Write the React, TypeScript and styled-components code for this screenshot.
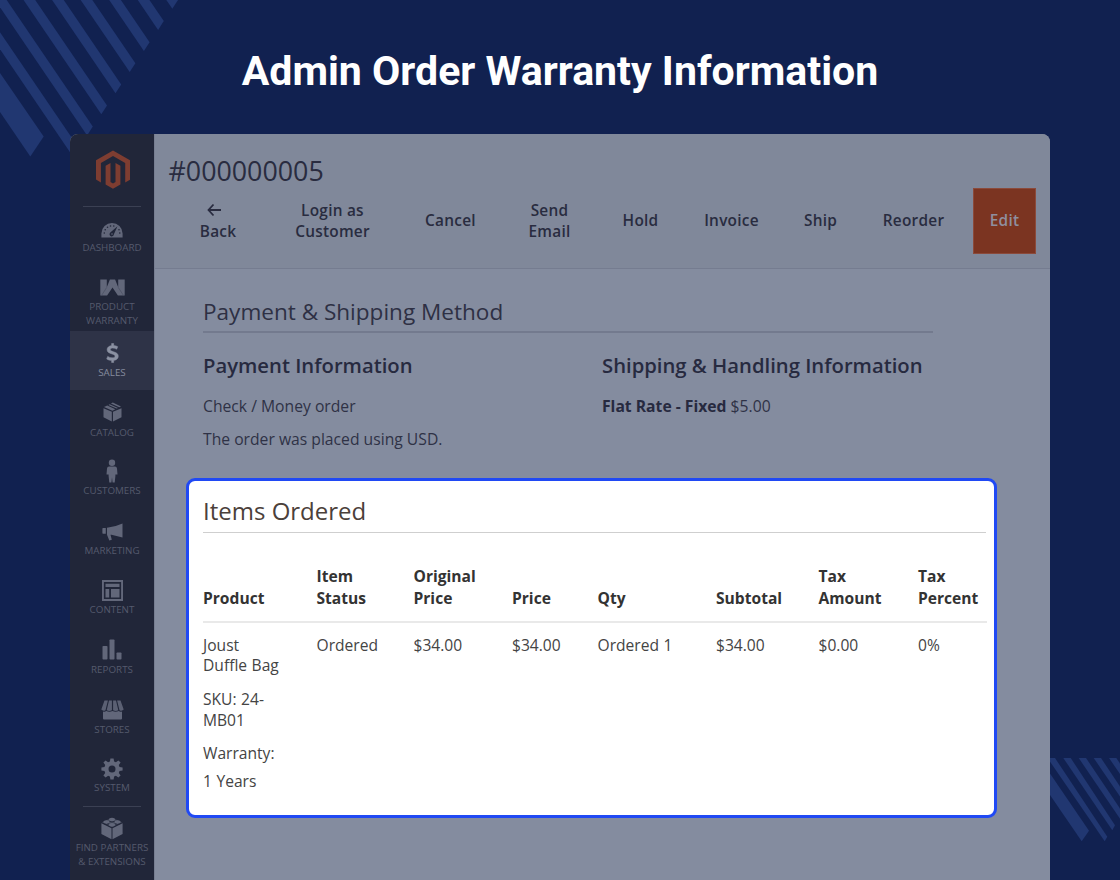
import React from 'react';
import styled, { createGlobalStyle, css } from 'styled-components';

const GlobalStyle = createGlobalStyle`
  *, *::before, *::after { box-sizing: border-box; }
  body {
    margin: 0;
    background: #112150;
    font-family: 'Open Sans', 'Noto Sans', sans-serif;
  }
`;

const Page = styled.main`
  position: relative;
  display: flex;
  flex-direction: column;
  align-items: center;
  width: 1120px;
  height: 880px;
  overflow: hidden;
  background: #112150;
`;

const Stripes = styled.svg`
  position: absolute;
  inset: 0;
  fill: #213771;
`;

const Heading = styled.h1`
  position: relative;
  margin: 0;
  height: 134px;
  padding-top: 47px;
  font: 700 41.05px/48px Roboto, sans-serif;
  color: #fff;
  white-space: nowrap;
`;

const Window = styled.div`
  position: relative;
  display: flex;
  width: 980px;
  height: 746px;
  border-radius: 8px 8px 0 0;
  overflow: hidden;
  background: #848c9f;
`;

const Sidebar = styled.nav`
  display: flex;
  flex-direction: column;
  align-items: center;
  width: 84px;
  flex: none;
  background: #212639;
`;

const LogoBox = styled.div`
  display: flex;
  justify-content: center;
  width: 58px;
  height: 73px;
  padding: 16px 0 0 1px;
  border-bottom: 1px solid #3b4053;
  svg { display: block; }
`;

const MenuItem = styled.a<{ $active?: boolean; $tall?: boolean; $first?: boolean }>`
  display: flex;
  flex-direction: column;
  align-items: center;
  width: 100%;
  flex: none;
  height: ${(p) => (p.$tall ? 66 : 59.4)}px;
  padding-top: 10px;
  color: #62677a;
  ${(p) => p.$first && css`height: 58px; padding-top: 11px;`}
  ${(p) => p.$active && css`color: #8b91a2; background: #2e3347;`}
`;

const IconBox = styled.span`
  display: flex;
  align-items: center;
  justify-content: center;
  height: 24px;
  flex: none;
  svg { display: block; fill: currentColor; }
`;

const MenuLabel = styled.span<{ $active?: boolean; $shift?: number }>`
  margin-top: ${(p) => 1 + (p.$shift ?? 0)}px;
  font-size: 9.8px;
  line-height: 14px;
  text-align: center;
  text-transform: uppercase;
  white-space: pre-line;
  color: ${(p) => (p.$active ? '#858b9e' : '#555a6d')};
`;

const Divider = styled.hr`
  width: 58px;
  height: 1px;
  flex: none;
  margin: 0;
  border: 0;
  background: #3b4053;
`;

const Content = styled.div`
  display: flex;
  flex-direction: column;
  flex: 1;
  border-left: 1px solid #777e91;
`;

const Header = styled.header`
  height: 135px;
  padding: 20px 14px 0;
  background: #80889a;
  border-bottom: 1px solid #757c90;
`;

const OrderNumber = styled.h2`
  margin: 0 0 0 -0.5px;
  height: 34px;
  font-size: 26.8px;
  font-weight: 400;
  line-height: 34px;
  color: #292c40;
`;

const Actions = styled.div`
  display: grid;
  grid-template-columns: 80px 149px 87px 111px 71px 111px 67px 119px 63px;
  justify-content: end;
  height: 66px;
`;

const Action = styled.button<{ $primary?: boolean }>`
  display: flex;
  flex-direction: column;
  align-items: center;
  justify-content: center;
  padding: 0 0 1px;
  border: 0;
  background: transparent;
  font: 600 15.4px/21px 'Open Sans', sans-serif;
  letter-spacing: 0.25px;
  text-align: center;
  white-space: pre-line;
  color: #292c40;
  svg { display: block; margin: 3px 8px 4px 0; }
  ${(p) => p.$primary && css`
    background: #7b3421;
    border: 1px solid #8b4a3b;
    color: #8f8f9f;
  `}
`;

const Details = styled.section`
  width: 730px;
  margin: 28px 0 0 48px;
  height: 181px;
`;

const SectionTitle = styled.h3<{ $light?: boolean }>`
  margin: 0;
  font-weight: 400;
  ${(p) => p.$light ? css`
    width: 783px;
    height: 39px;
    font-size: 24px;
    line-height: 34px;
    color: #4b403a;
    border-bottom: 1px solid #cfcfcf;
  ` : css`
    height: 36px;
    font-size: 22.55px;
    line-height: 30px;
    color: #2e3044;
    border-bottom: 2px solid #737a8e;
  `}
`;

const Columns = styled.div`
  display: grid;
  grid-template-columns: 399px 1fr;
`;

const SubTitle = styled.h4`
  margin: 19px 0 17px;
  font-size: 20.25px;
  font-weight: 600;
  line-height: 27px;
  color: #272a3f;
  white-space: nowrap;
`;

const Text = styled.p`
  margin: 0 0 12px;
  font-size: 15.7px;
  line-height: 21px;
  color: #2f3246;
  b { color: #272a3f; }
`;

const Card = styled.section`
  width: 811px;
  height: 340px;
  margin-left: 31px;
  padding: 13px 7px 0 14px;
  border: 3px solid #2049f4;
  border-radius: 9px;
  background: #fff;
`;

const Table = styled.table`
  width: 784px;
  table-layout: fixed;
  border-collapse: collapse;
  font-size: 15.6px;
  color: #444;
`;

const Col = styled.col<{ $w: number }>`
  width: ${(p) => p.$w}px;
`;

const Th = styled.th`
  height: 89px;
  padding: 0 0 12px;
  vertical-align: bottom;
  text-align: left;
  font-weight: 700;
  line-height: 22px;
  white-space: pre-line;
  color: #333;
  border-bottom: 2px solid #e9e9e9;
`;

const Td = styled.td`
  padding: 12px 0 0;
  vertical-align: top;
  line-height: 20.5px;
  white-space: pre-line;
  word-spacing: 0.5px;
`;

const Line = styled.div<{ $gap?: number; $lead?: number }>`
  margin-top: ${(p) => p.$gap ?? 0}px;
  line-height: ${(p) => p.$lead ?? 20.5}px;
`;

const LogoIcon = () => (
  <svg width="36" height="40" viewBox="0 0 36 40" fill="#7e3d31">
    <path d="M18 .5 35 10.2V29.700L30.200 32.400V12.900L18 6 5.900 12.900V32.400L1 29.600V10.200Z" />
    <path d="M10.600 15.700 15.500 13V31.900L18 33.400 20.500 31.900V13L25.400 15.700V34.500L18 38.800 10.600 34.500Z" />
  </svg>
);

const DashboardIcon = () => (
  <svg width="22" height="16" viewBox="0 0 22 16">
    <path d="M11 1A10.600 10.600 0 0 0 .4 11.500V15.500H21.600V11.500A10.600 10.600 0 0 0 11 1Z" />
    <g fill="#212639">
      <circle cx="3.300" cy="11" r=".8" /><circle cx="4.200" cy="7.800" r=".8" />
      <circle cx="6.500" cy="5.200" r=".8" /><circle cx="9.500" cy="4" r=".8" />
      <circle cx="12.800" cy="4" r=".8" /><circle cx="18" cy="7.800" r=".8" />
      <circle cx="18.800" cy="11" r=".8" />
      <path d="M16.500 4.300 12.900 12.200A2.200 2.200 0 1 1 9.300 10.500Z" />
    </g>
    <circle cx="11" cy="12" r=".8" />
  </svg>
);

const WarrantyIcon = () => (
  <svg width="25" height="17" viewBox="0 0 25 17">
    <path d="M.3.500H6.800V8.300L9.900.500H15.100L18.200 8.300V.500H24.700V16.500H17.900L12.500 8.600 7.100 16.500H.3Z" />
    <path d="M6.800 8.300 1.500 16.500M18.200 8.300 23.500 16.500" fill="none" stroke="#4b5063" strokeWidth=".7" />
  </svg>
);

const DollarIcon = () => (
  <svg width="13" height="20" viewBox="0 0 13 19" stroke="currentColor" strokeWidth=".5">
    <path d="M5.600 0H7.700V2C9.400 2.100 10.800 2.600 11.700 3.200L10.700 5.700C9.600 5.100 8.300 4.600 6.800 4.600C5.200 4.600 4.300 5.200 4.300 6.100C4.300 7 5 7.500 7.400 8.200C10.900 9.200 12.300 10.500 12.300 12.700C12.300 14.900 10.600 16.600 7.700 16.900V19H5.600V17C3.600 16.900 1.800 16.300.700 15.500L1.700 12.900C2.900 13.700 4.500 14.300 6.200 14.300C8 14.300 9 13.700 9 12.700C9 11.700 8.200 11.200 6.100 10.500C2.900 9.500 1.100 8.500 1.100 6.200C1.100 4 2.800 2.500 5.600 2.100Z" />
  </svg>
);

const CatalogIcon = () => (
  <svg width="19" height="20" viewBox="0 0 19 20">
    <path d="M.500 6.200 8.800 9.800V19.500L.500 15.300ZM18.500 6.200 10 9.800V19.500L18.500 15.300ZM1 5.100 4.200 3.500 12.400 7.200 9.400 8.700ZM5.400 2.900 6.700 2.200 15 5.900 13.600 6.600ZM7.900 1.600 9.800.600 18 4.500 16.200 5.300Z" />
  </svg>
);

const CustomerIcon = () => (
  <svg width="12" height="26" viewBox="0 0 12 26">
    <circle cx="6" cy="3.800" r="3.200" />
    <path d="M3 7.600H9Q10.800 7.600 11 9.500L11.500 15.500H9.400V17L8.700 23.500H6.600L6 18.500 5.400 23.500H3.300L2.600 17V15.500H.500L1 9.500Q1.200 7.600 3 7.600Z" />
  </svg>
);

const MarketingIcon = () => (
  <svg width="21" height="20" viewBox="0 -2 21 20">
    <path d="M20.500.500V14.500L9.500 11.800H8.500L9.800 16.800 7.300 17.500 5 11.800V4.800Q13 4 20.500.500ZM1 5H3.800V10.700H1Q.400 10.700.400 10V5.700Q.400 5 1 5Z" />
  </svg>
);

const ContentIcon = () => (
  <svg width="21" height="21" viewBox="0 0 21 21">
    <path fillRule="evenodd" d="M0 0H21V21H0ZM1.900 1.900V19.100H19.100V1.900ZM3.500 3.700H17.500V7.100H3.500ZM3.500 9H7.200V17.500H3.500ZM9 9H17.500V17.500H9Z" />
  </svg>
);

const ReportsIcon = () => (
  <svg width="20" height="21" viewBox="0 0 20 21">
    <rect x=".500" y="7" width="5" height="13.500" rx=".800" />
    <rect x="7.500" y=".500" width="5" height="20" rx=".800" />
    <rect x="14.500" y="13.500" width="5" height="7" rx=".800" />
  </svg>
);

const StoresIcon = () => (
  <svg width="23" height="22" viewBox="0 -2 23 22">
    <path d="M3.500.500H6.900L4.500 10.200Q2 11.500.300 9.600ZM8 .500H10.900V10.200Q8.200 11.800 5.700 10.200ZM12.100.500H15L17.300 10.200Q14.800 11.800 12.100 10.200ZM16.100.500H19.500L22.700 9.600Q21 11.500 18.500 10.200Z" opacity=".9" />
    <path d="M2 11.500Q4 12 5.200 11.100Q8.500 12.600 11.500 11.100Q14.500 12.600 17.800 11.100Q19 12 21 11.500V18.500Q21 19.500 20 19.500H3Q2 19.500 2 18.500Z" />
  </svg>
);

const SystemIcon = () => (
  <svg width="22" height="22" viewBox="0 0 22 22">
    <path fillRule="evenodd" d="M9.400.400H12.600L13.100 3.500 14.900 4.200 17.400 2.400 19.600 4.600 17.800 7.100 18.500 8.900 21.600 9.400V12.600L18.500 13.100 17.800 14.900 19.600 17.400 17.400 19.600 14.900 17.800 13.100 18.500 12.600 21.600H9.400L8.900 18.500 7.100 17.800 4.600 19.600 2.400 17.400 4.200 14.900 3.500 13.100.400 12.600V9.400L3.500 8.900 4.200 7.100 2.400 4.600 4.600 2.400 7.100 4.200 8.900 3.500ZM11 7.500A3.500 3.500 0 1 0 11 14.500A3.500 3.500 0 1 0 11 7.500Z" />
  </svg>
);

const PartnersIcon = () => (
  <svg width="22" height="25" viewBox="0 0 22 25">
    <path d="M.400 6.300 10.500 11.300V22.300L.400 17ZM21.600 6.300 11.500 11.300V22.300L21.600 17Z" />
    <path d="M1 5.200 11 .800 21 5.200 11 10.200Z" opacity=".55" />
    <ellipse cx="11" cy="2.500" rx="3" ry="1.700" /><ellipse cx="5.500" cy="5" rx="3" ry="1.700" />
    <ellipse cx="16.500" cy="5" rx="3" ry="1.700" /><ellipse cx="11" cy="7.700" rx="3" ry="1.700" />
    <path d="M8.300 4.200Q11 5.800 13.700 4.200M2.800 6.700Q5.500 8.300 8.200 6.700M13.800 6.700Q16.500 8.300 19.200 6.700" fill="none" stroke="#212639" strokeWidth=".8" />
  </svg>
);

const BackArrow = () => (
  <svg width="14" height="14" viewBox="0 0 14 14" fill="none" stroke="#292c40" strokeWidth="1.8">
    <path d="M6.500 1.500 1.500 7 6.500 12.500M1.500 7H14" />
  </svg>
);

const menu = [
  { label: 'Dashboard', icon: <DashboardIcon />, first: true, shift: -2 },
  { label: 'Product\nWarranty', icon: <WarrantyIcon />, tall: true },
  { label: 'Sales', icon: <DollarIcon />, active: true },
  { label: 'Catalog', icon: <CatalogIcon />, shift: 0.7 },
  { label: 'Customers', icon: <CustomerIcon />, shift: -0.5 },
  { label: 'Marketing', icon: <MarketingIcon /> },
  { label: 'Content', icon: <ContentIcon />, shift: -0.5 },
  { label: 'Reports', icon: <ReportsIcon /> },
  { label: 'Stores', icon: <StoresIcon />, shift: 0.3 },
  { label: 'System', icon: <SystemIcon />, shift: -0.8 },
];

const actions = ['Login as\nCustomer', 'Cancel', 'Send\nEmail', 'Hold', 'Invoice', 'Ship', 'Reorder'];

const columns = [
  { title: 'Product', width: 113.5 },
  { title: 'Item\nStatus', width: 97 },
  { title: 'Original\nPrice', width: 98.5 },
  { title: 'Price', width: 85.5 },
  { title: 'Qty', width: 118.5 },
  { title: 'Subtotal', width: 102.5 },
  { title: 'Tax\nAmount', width: 99.5 },
  { title: 'Tax\nPercent', width: 69 },
];

const values = ['Ordered', '$34.00', '$34.00', 'Ordered  1', '$34.00', '$0.00', '0%'];

const topStripes = [0, 1, 2, 3, 4, 5, 6, 7].map((i) => {
  const x = 178 - 14.2 * i;
  const y = 21.1 * i;
  return `${x},${y} ${x - 5.7},${y + 8.8} ${x - 205.7},${y - 285.2} ${x - 200},${y - 294}`;
});

const bottomStripes = [
  '1047.500,758 1055,758 1107.300,836.700 1104.700,841.300',
  '1063.300,758 1070.700,758 1115,825.300 1112.300,830.300',
  '1078.700,758 1086,758 1120,808.400 1120,818.700',
  '1093.700,758 1101,758 1120,786.500 1120,796.500',
  '1109,758 1116.300,758 1120,763.500 1120,774',
  '1050,773.500 1089,830.700 1081.700,841.300 1050,795',
];

export default function App() {
  return (
    <>
      <GlobalStyle />
      <Page>
        <Stripes width="1120" height="880" viewBox="0 0 1120 880">
          <polygon points="0,73 43.700,136.500 30.300,156.500 0,112" />
          {topStripes.map((p) => <polygon key={p} points={p} />)}
          {bottomStripes.map((p) => <polygon key={p} points={p} />)}
        </Stripes>
        <Heading>Admin Order Warranty Information</Heading>
        <Window>
          <Sidebar>
            <LogoBox><LogoIcon /></LogoBox>
            {menu.map((m) => (
              <MenuItem key={m.label} $active={m.active} $tall={m.tall} $first={m.first}>
                <IconBox>{m.icon}</IconBox>
                <MenuLabel $active={m.active} $shift={m.shift}>{m.label}</MenuLabel>
              </MenuItem>
            ))}
            <Divider />
            <MenuItem $tall>
              <IconBox><PartnersIcon /></IconBox>
              <MenuLabel $shift={-1}>{'Find Partners\n& Extensions'}</MenuLabel>
            </MenuItem>
          </Sidebar>
          <Content>
            <Header>
              <OrderNumber>#000000005</OrderNumber>
              <Actions>
                <Action><BackArrow />Back</Action>
                {actions.map((a) => <Action key={a}>{a}</Action>)}
                <Action $primary>Edit</Action>
              </Actions>
            </Header>
            <Details>
              <SectionTitle>Payment &amp; Shipping Method</SectionTitle>
              <Columns>
                <div>
                  <SubTitle>Payment Information</SubTitle>
                  <Text>Check / Money order</Text>
                  <Text>The order was placed using USD.</Text>
                </div>
                <div>
                  <SubTitle>Shipping &amp; Handling Information</SubTitle>
                  <Text><b>Flat Rate - Fixed</b> $5.00</Text>
                </div>
              </Columns>
            </Details>
            <Card>
              <SectionTitle $light>Items Ordered</SectionTitle>
              <Table>
                <colgroup>{columns.map((c) => <Col key={c.title} $w={c.width} />)}</colgroup>
                <thead>
                  <tr>{columns.map((c) => <Th key={c.title}>{c.title}</Th>)}</tr>
                </thead>
                <tbody>
                  <tr>
                    <Td>
                      <Line $lead={20}>{'Joust\nDuffle Bag'}</Line>
                      <Line $gap={14}>{'SKU: 24-\nMB01'}</Line>
                      <Line $gap={13}>Warranty:</Line>
                      <Line $gap={7}>1 Years</Line>
                    </Td>
                    {values.map((v, i) => <Td key={i}>{v}</Td>)}
                  </tr>
                </tbody>
              </Table>
            </Card>
          </Content>
        </Window>
      </Page>
    </>
  );
}
